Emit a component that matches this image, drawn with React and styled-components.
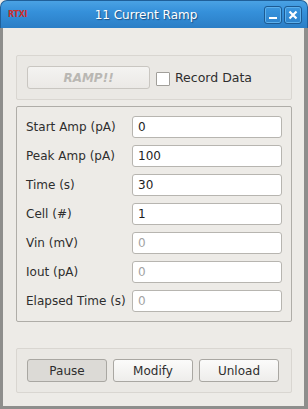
import React from 'react';
import styled, { createGlobalStyle } from 'styled-components';

const Global = createGlobalStyle`
  html, body { margin: 0; padding: 0; background: #edebe7; }
  body { font-family: "DejaVu Sans", "Liberation Sans", sans-serif; }
`;

const Window = styled.div`
  width: 308px;
  height: 409px;
  display: flex;
  flex-direction: column;
  box-sizing: border-box;
`;

const TitleBar = styled.div`
  height: 28px;
  flex: none;
  box-sizing: border-box;
  border: 1px solid #1f5f99;
  border-bottom: none;
  border-radius: 7px 7px 0 0;
  background: linear-gradient(#4aa2e4, #3590da 40%, #2b7ec6);
  display: flex;
  align-items: center;
  padding: 0 5px 0 7px;
`;

const Logo = styled.span`
  font-family: "DejaVu Sans", sans-serif;
  font-size: 8px;
  font-weight: bold;
  color: #c8302c;
  letter-spacing: -0.3px;
  width: 20px;
`;

const Title = styled.div`
  flex: 1;
  text-align: center;
  color: #ffffff;
  font-size: 12px;
  text-shadow: 1px 1px 1px #1c4f80;
`;

const TitleButtons = styled.div`
  display: flex;
  gap: 2px;
`;

const TitleButton = styled.div`
  width: 18px;
  height: 18px;
  box-sizing: border-box;
  border: 1px solid #1d5a92;
  border-radius: 3px;
  box-shadow: inset 0 0 0 1px #5cb0ec;
  display: flex;
  align-items: center;
  justify-content: center;
`;

const Body = styled.div`
  flex: 1;
  border: solid #8e8e8c;
  border-width: 0 4px 3px 3px;
  background: #edebe7;
  padding: 27px 12px 0 13px;
  display: flex;
  flex-direction: column;
`;

const Group = styled.div`
  border: 1px solid ${p => (p.$strong ? '#afada8' : '#d9d6d1')};
  background: ${p => (p.$strong ? '#edebe7' : '#eae8e4')};
  border-radius: 2px;
  padding: ${p => p.$pad || '10px'};
  margin-bottom: ${p => p.$mb || '0'};
  display: flex;
  ${p => (p.$column ? 'flex-direction: column; gap: 7px;' : 'align-items: center;')}
`;

const Button = styled.button`
  font-family: "DejaVu Sans", sans-serif;
  font-size: 12px;
  height: 23px;
  width: ${p => p.$w || '80px'};
  box-sizing: border-box;
  border: 1px solid ${p => (p.$disabled ? '#c9c6c1' : '#a9a7a2')};
  border-radius: 3px;
  color: ${p => (p.$disabled ? '#b9b7b3' : '#2e2e2e')};
  background: ${p =>
    p.$pressed
      ? '#dcdad6'
      : p.$disabled
      ? 'linear-gradient(#f4f3f1, #ebe9e6)'
      : 'linear-gradient(#fbfbfa, #eeedeb)'};
  font-weight: ${p => (p.$bold ? 'bold' : 'normal')};
  font-style: ${p => (p.$italic ? 'italic' : 'normal')};
  padding: 0;
`;

const Check = styled.span`
  width: 14px;
  height: 14px;
  box-sizing: border-box;
  border: 1px solid #a19f9a;
  background: #ffffff;
  border-radius: 1px;
  margin-left: 6px;
  margin-right: 5px;
  margin-top: 2px;
`;

const CheckLabel = styled.span`
  font-size: 12.5px;
  color: #2e2e2e;
`;

const Row = styled.div`
  display: flex;
  align-items: center;
  height: 22px;
`;

const Label = styled.span`
  width: 106px;
  font-size: 12px;
  color: #2e2e2e;
  white-space: nowrap;
`;

const Field = styled.div`
  width: 150px;
  height: 22px;
  box-sizing: border-box;
  border: 1px solid #b7b5b0;
  border-radius: 3px;
  background: #ffffff;
  font-size: 12px;
  color: ${p => (p.$readonly ? '#a3a3a3' : '#1e1e1e')};
  padding: 0 5px;
  display: flex;
  align-items: center;
`;

const ButtonRow = styled.div`
  display: flex;
  gap: 6px;
`;

const fields = [
  ['Start Amp (pA)', '0'],
  ['Peak Amp (pA)', '100'],
  ['Time (s)', '30'],
  ['Cell (#)', '1'],
  ['Vin (mV)', '0', true],
  ['Iout (pA)', '0', true],
  ['Elapsed Time (s)', '0', true],
];

export default function App() {
  return (
    <Window>
      <Global />
      <TitleBar>
        <Logo>RTXI</Logo>
        <Title>11 Current Ramp</Title>
        <TitleButtons>
          <TitleButton>
            <svg width="10" height="10" viewBox="0 0 10 10">
              <rect x="1" y="7" width="8" height="2" fill="#fff" />
            </svg>
          </TitleButton>
          <TitleButton>
            <svg width="10" height="10" viewBox="0 0 10 10">
              <path d="M1.5 1.5 L8.5 8.5 M8.5 1.5 L1.5 8.5" stroke="#fff" strokeWidth="2.2" />
            </svg>
          </TitleButton>
        </TitleButtons>
      </TitleBar>
      <Body>
        <Group $pad="10px" $mb="6px">
          <Button $w="123px" $disabled $bold $italic>RAMP!!</Button>
          <Check />
          <CheckLabel>Record Data</CheckLabel>
        </Group>
        <Group $strong $column $pad="9px" $mb="26px">
          {fields.map(([label, value, ro]) => (
            <Row key={label}>
              <Label>{label}</Label>
              <Field $readonly={ro}>{value}</Field>
            </Row>
          ))}
        </Group>
        <Group $pad="10px">
          <ButtonRow>
            <Button $pressed>Pause</Button>
            <Button>Modify</Button>
            <Button>Unload</Button>
          </ButtonRow>
        </Group>
      </Body>
    </Window>
  );
}
